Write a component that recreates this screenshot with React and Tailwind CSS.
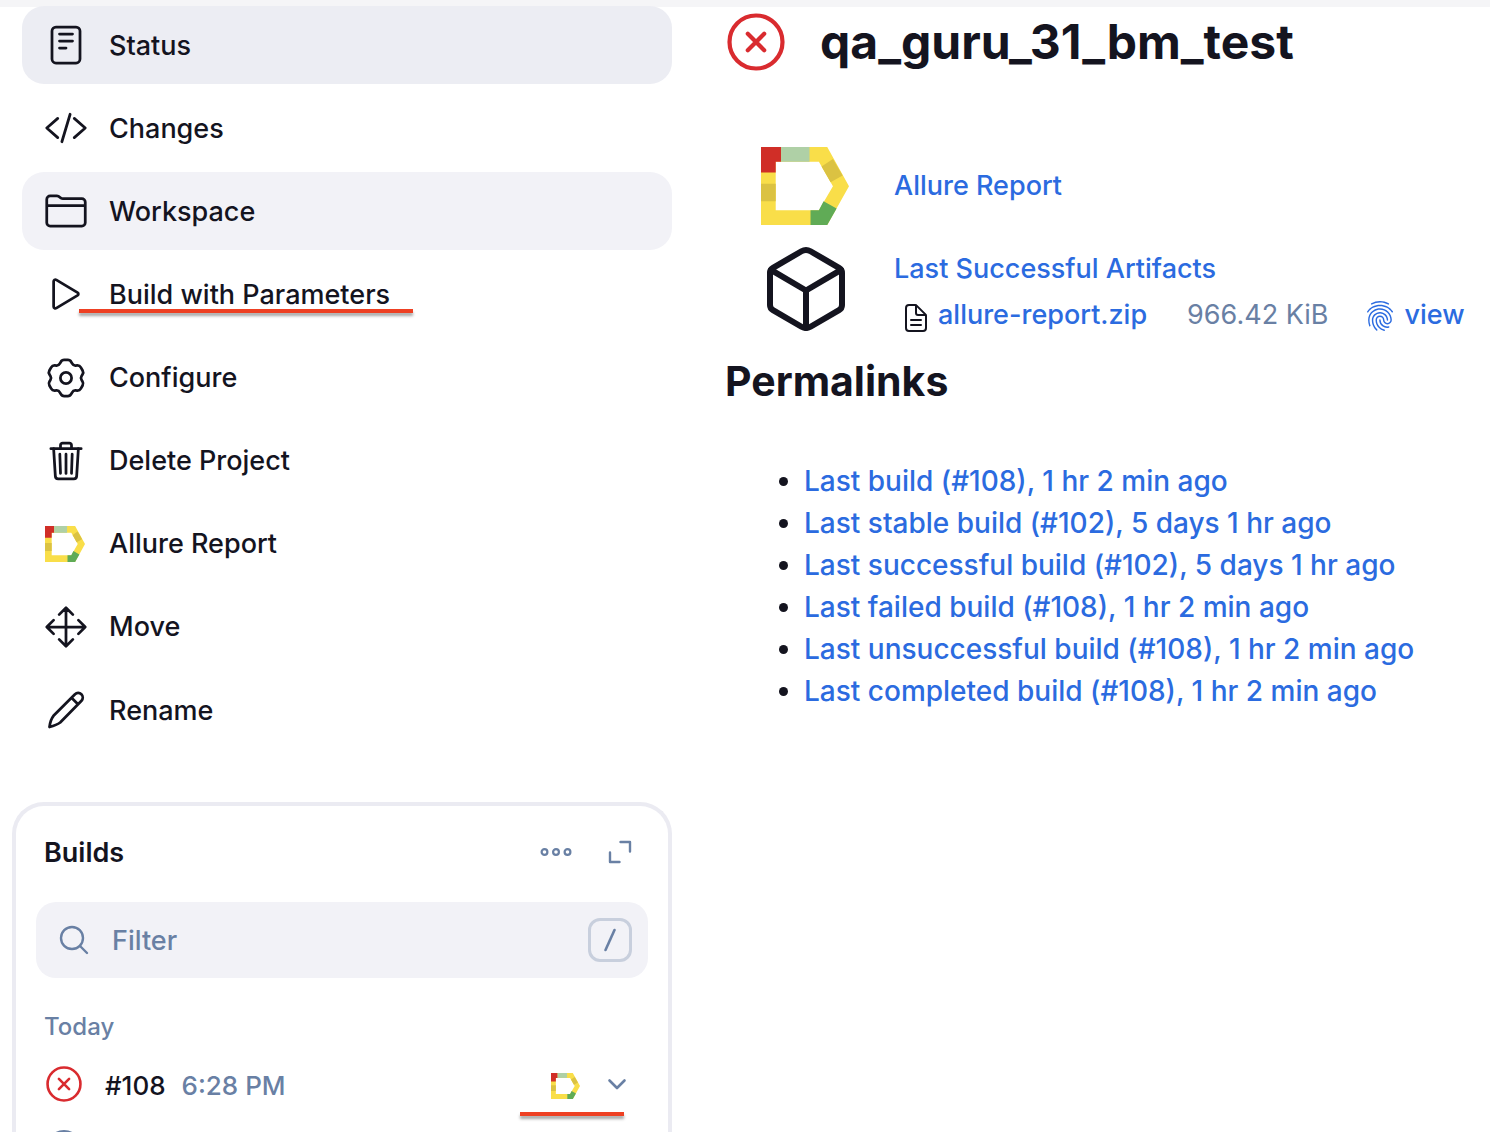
import React from "react";
import {
  IoCodeSlashOutline,
  IoFolderOutline,
  IoPlayOutline,
  IoTrashOutline,
  IoMoveOutline,
  IoCubeOutline,
  IoDocumentTextOutline,
  IoFingerPrintOutline,
} from "react-icons/io5";

function AllureLogo({ className }) {
  return (
    <svg viewBox="35 18 263 233" preserveAspectRatio="none" className={className} aria-hidden="true">
      <path
        fill="#f9de49"
        fillRule="evenodd"
        d="M35 18H233L298 135L233 251H35ZM79 62V207H208L250 135L208 62Z"
      />
      <path fill="#d02e27" d="M35 18H95V62H79V94H35Z" />
      <path fill="#afd0a6" d="M95 18H180V62H95Z" />
      <path fill="#dbc242" d="M216 76L250 54L279 103L243 123ZM35 128H79V180H35Z" />
      <path fill="#60ab56" d="M183 207H208L222 180L261 202L233 251H183Z" />
    </svg>
  );
}

function StatusIcon({ className }) {
  return (
    <svg viewBox="0 0 44 44" className={className} fill="none" stroke="currentColor" strokeWidth="2.75" strokeLinecap="round" aria-hidden="true">
      <rect x="8" y="4" width="28" height="36" rx="4" />
      <path d="M15.500 11H28.500M15.500 18H28.500M15.500 25H22" />
    </svg>
  );
}

// Six-lobed cog: each lobe has two corners, with a valley between neighbours.
const cogPoint = (degrees, radius) => {
  const a = (degrees * Math.PI) / 180;
  return [22 + radius * Math.cos(a), 22 - radius * Math.sin(a)];
};
const cogCorners = [0, 60, 120, 180, 240, 300].flatMap((d) => [
  cogPoint(d, 14.3),
  cogPoint(d + 17, 18.6),
  cogPoint(d + 43, 18.6),
]);
const towards = ([x, y], [tx, ty], distance) => {
  const k = distance / Math.hypot(tx - x, ty - y);
  return [x + (tx - x) * k, y + (ty - y) * k];
};
const cogPath =
  cogCorners
    .map((corner, i) => {
      const before = cogCorners[(i + cogCorners.length - 1) % cogCorners.length];
      const after = cogCorners[(i + 1) % cogCorners.length];
      const start = towards(corner, before, 2.4);
      const end = towards(corner, after, 2.4);
      return (i ? "L" : "M") + start.join(" ") + "Q" + corner.join(" ") + " " + end.join(" ");
    })
    .join("") + "Z";

function CogIcon({ className }) {
  return (
    <svg viewBox="0 0 44 44" className={className} fill="none" stroke="currentColor" strokeWidth="2.75" strokeLinejoin="round" aria-hidden="true">
      <path d={cogPath} />
      <circle cx="22" cy="22" r="5.600" />
    </svg>
  );
}

function PencilIcon({ className }) {
  return (
    <svg viewBox="0 0 44 44" className={className} fill="none" stroke="currentColor" strokeWidth="2.75" strokeLinecap="round" strokeLinejoin="round" aria-hidden="true">
      <path d="M5.500 39C5.900 35 7 31 9.500 27.800L31 6.200A4.600 4.600 0 0 1 37.500 12.700L16.200 34.500C13 37 9.500 38 5.500 39ZM27.500 9.700L34 16.200" />
    </svg>
  );
}

function FailedIcon({ className }) {
  return (
    <svg viewBox="0 0 58 58" className={className} fill="none" stroke="#d92b2f" strokeLinecap="round" role="img" aria-label="Failed">
      <circle cx="29" cy="29" r="26.500" strokeWidth="4.200" />
      <path d="M20.800 20.800L37.200 37.200M37.200 20.800L20.800 37.200" strokeWidth="4.200" />
    </svg>
  );
}

const tasks = [
  { label: "Status", icon: StatusIcon, tone: "bg-[#ecedf3]" },
  { label: "Changes", icon: IoCodeSlashOutline },
  { label: "Workspace", icon: IoFolderOutline, tone: "bg-[#f2f2f7]" },
  { label: "Build with Parameters", icon: IoPlayOutline, marked: true },
  { label: "Configure", icon: CogIcon },
  { label: "Delete Project", icon: IoTrashOutline },
  { label: "Allure Report", icon: AllureLogo, logo: true },
  { label: "Move", icon: IoMoveOutline },
  { label: "Rename", icon: PencilIcon },
];

const permalinks = [
  "Last build (#108), 1 hr 2 min ago",
  "Last stable build (#102), 5 days 1 hr ago",
  "Last successful build (#102), 5 days 1 hr ago",
  "Last failed build (#108), 1 hr 2 min ago",
  "Last unsuccessful build (#108), 1 hr 2 min ago",
  "Last completed build (#108), 1 hr 2 min ago",
];

function Task({ label, icon: Icon, tone = "", marked, logo }) {
  return (
    <a href="#" className={"relative flex h-[78px] items-center gap-[21px] rounded-[22px] px-[22px] " + tone}>
      <span className="flex size-11 shrink-0 items-center">
        <Icon className={logo ? "ml-px h-9 w-10" : "size-11"} />
      </span>
      <span className="pt-px whitespace-nowrap">{label}</span>
      {marked && <span className="absolute bottom-5 left-[57px] h-1 w-[334px] bg-[#ee4023] shadow-[0_3px_3px_rgba(0,0,0,0.35)]" />}
    </a>
  );
}

function Builds() {
  return (
    <section className="mt-[53px] ml-3 flex min-h-0 flex-1 flex-col overflow-hidden rounded-t-[32px] border-4 border-b-0 border-[#ebebf2] px-5 pt-5 text-[#6980a4]">
      <div className="flex h-[52px] shrink-0 items-center justify-between pr-[6px] pl-2">
        <h2 className="pt-px text-[27px] font-semibold text-[#14141f]">Builds</h2>
        <div className="flex items-center gap-5">
          <button type="button" aria-label="More actions" className="flex size-11 items-center justify-center">
            <svg viewBox="0 0 34 10" className="h-[10px] w-[34px]" fill="none" stroke="currentColor" strokeWidth="2.200" aria-hidden="true">
              <circle cx="5.500" cy="5" r="2.900" />
              <circle cx="17" cy="5" r="2.900" />
              <circle cx="28.500" cy="5" r="2.900" />
            </svg>
          </button>
          <button type="button" aria-label="Expand" className="flex size-11 items-center justify-center">
            <svg viewBox="0 0 24 24" className="size-6" fill="none" stroke="currentColor" strokeWidth="2.400" strokeLinecap="round" strokeLinejoin="round" aria-hidden="true">
              <path d="M12.500 2H22V11.500M2 12.500V22H11.500" />
            </svg>
          </button>
        </div>
      </div>

      <div className="mt-6 flex h-[76px] shrink-0 items-center rounded-[20px] bg-[#f2f2f7] px-4">
        <svg viewBox="0 0 44 44" className="size-11 shrink-0" fill="none" stroke="currentColor" strokeWidth="2.400" strokeLinecap="round" aria-hidden="true">
          <circle cx="20" cy="20" r="11" />
          <path d="M28 28L35 35" />
        </svg>
        <input type="text" aria-label="Filter builds" placeholder="Filter" className="ml-4 min-w-0 flex-1 bg-transparent pt-px outline-none placeholder:text-[#6980a4]" />
        <kbd className="flex size-11 items-center justify-center rounded-xl border-3 border-[#c8cfdd]">
          <svg viewBox="0 0 24 24" className="size-6" stroke="currentColor" strokeWidth="2.600" strokeLinecap="round" aria-hidden="true">
            <path d="M7.500 22L16.500 2" />
          </svg>
        </kbd>
      </div>

      <h3 className="mt-[33px] shrink-0 px-2 text-[24px] leading-8 font-medium">Today</h3>
      <div className="relative mt-[9px] flex h-16 shrink-0 items-center pr-[20px] pl-[10px] text-[26px]">
        <FailedIcon className="size-9" />
        <a href="#" className="ml-[23px] pt-1 text-[#14141f]">#108</a>
        <span className="ml-4 pt-1">6:28 PM</span>
        <a href="#" aria-label="Allure Report" className="ml-auto pt-1">
          <AllureLogo className="h-[26px] w-[29px]" />
        </a>
        <button type="button" aria-label="Build actions" className="ml-[26px]">
          <svg viewBox="0 0 22 22" className="size-[22px]" fill="none" stroke="currentColor" strokeWidth="2.600" strokeLinecap="round" strokeLinejoin="round" aria-hidden="true">
            <path d="M3.500 7.500L11 15L18.500 7.500" />
          </svg>
        </button>
        <span className="absolute right-6 bottom-0 h-1 w-[104px] bg-[#ee4023] shadow-[0_3px_3px_rgba(0,0,0,0.35)]" />
      </div>
      <div className="flex shrink-0 px-[10px] pt-[14px]">
        <svg viewBox="0 0 36 36" className="size-9" fill="none" stroke="currentColor" strokeWidth="3" aria-hidden="true">
          <circle cx="18" cy="18" r="16.500" />
        </svg>
      </div>
    </section>
  );
}

export default function App() {
  return (
    <div className="flex h-screen flex-col overflow-hidden bg-white font-['Inter',sans-serif] text-[27px] leading-[42px] font-medium text-[#14141f]">
      <header className="h-[7px] shrink-0 bg-[#f5f5f7]" />
      <div className="grid min-h-0 flex-1 grid-cols-[minmax(0,672fr)_minmax(0,818fr)]">
        <aside className="flex min-h-0 flex-col">
          <nav className="-mt-px ml-[22px] flex h-[743px] shrink-0 flex-col justify-between">
            {tasks.map((task) => (
              <Task key={task.label} {...task} />
            ))}
          </nav>
          <Builds />
        </aside>

        <main className="min-w-0 pl-[53px]">
          <div className="flex items-center gap-[35px] pt-[6px] pl-[2px]">
            <FailedIcon className="size-[58px] shrink-0" />
            <h1 className="text-[48px] leading-[58px] font-bold">qa_guru_31_bm_test</h1>
          </div>

          <div className="mt-[66px] grid grid-cols-[96px_1fr] gap-x-10 pl-[33px] text-[#2b6be0]">
            <div className="flex h-[97px] items-center pl-[3px]">
              <AllureLogo className="h-[78px] w-[88px]" />
            </div>
            <div className="flex h-[97px] items-center">
              <a href="#">Allure Report</a>
            </div>
            <div className="flex h-[110px] items-center text-[#14141f]">
              <IoCubeOutline className="size-24" />
            </div>
            <div className="flex h-[110px] flex-col pt-[14px]">
              <a href="#">Last Successful Artifacts</a>
              <div className="mt-1 flex items-center whitespace-nowrap">
                <IoDocumentTextOutline className="mt-[6px] ml-[6px] size-8 text-[#14141f]" />
                <a href="#" className="ml-[6px]">allure-report.zip</a>
                <span className="ml-10 font-normal text-[#6980a4]">966.42 KiB</span>
                <a href="#" className="ml-9 flex items-center gap-2">
                  <IoFingerPrintOutline className="mt-[2px] size-8" />
                  view
                </a>
              </div>
            </div>
          </div>

          <h2 className="mt-[9px] text-[41px] leading-[56px] font-bold">Permalinks</h2>
          <ul className="mt-[51px] list-disc pl-[79px] text-[28px]">
            {permalinks.map((text) => (
              <li key={text}>
                <a href="#" className="text-[#2b6be0]">{text}</a>
              </li>
            ))}
          </ul>
        </main>
      </div>
    </div>
  );
}
